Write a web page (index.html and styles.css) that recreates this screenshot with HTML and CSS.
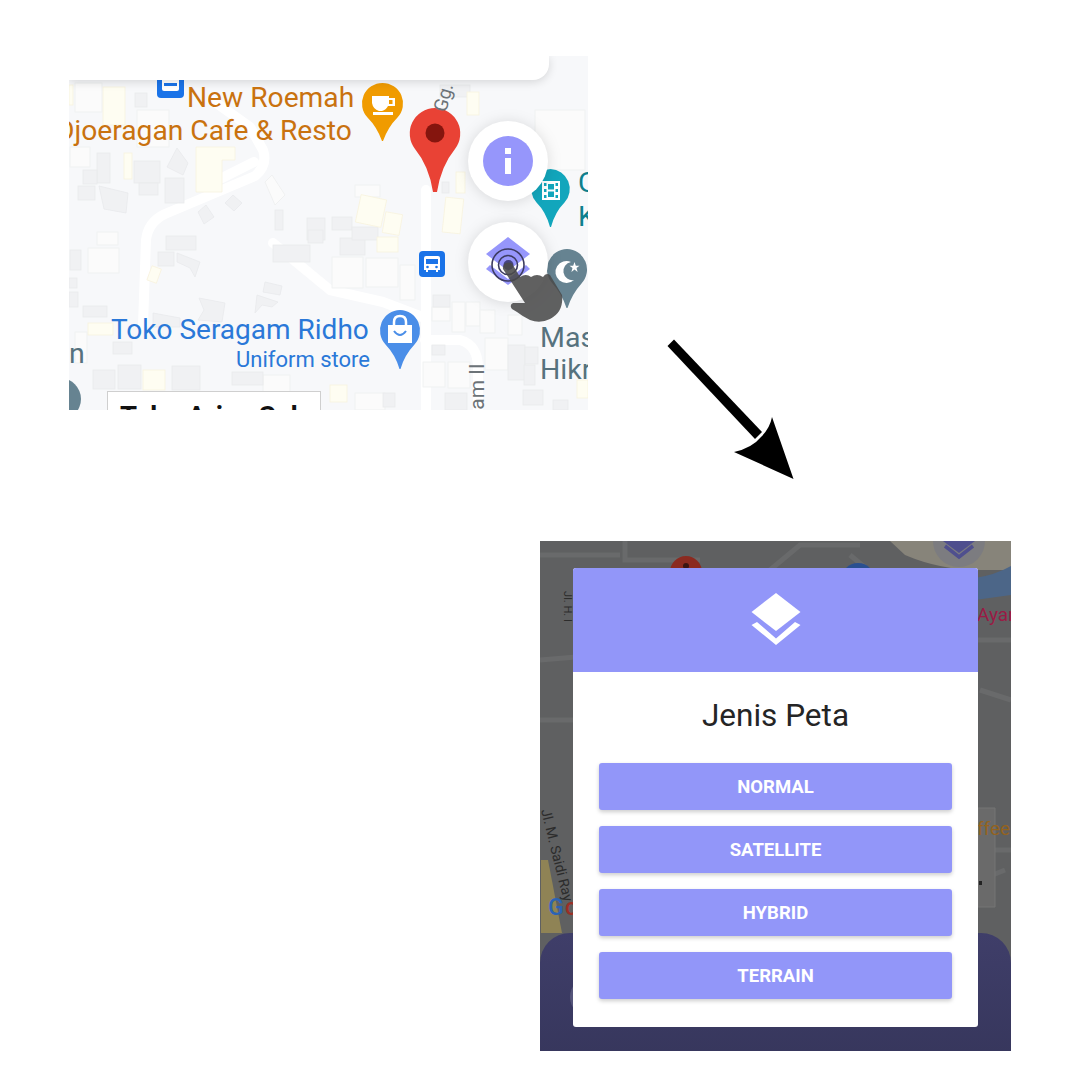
FILE: index.html
```html
<!DOCTYPE html>
<html lang="id">
<head>
<meta charset="utf-8">
<title>Jenis Peta</title>
<link rel="stylesheet" href="styles.css">
</head>
<body>
<main class="stage">
  <section class="map">
    <svg class="layer" viewBox="69 56 519 354" width="519" height="354">
      <g class="road">
        <path d="M143 325L146 240Q148 222 165 214L255 176Q268 165 263 150L250 127L212 100"/>
        <path d="M222 178L254 162"/>
        <path d="M273 243L330 290L383 302L425 318"/>
        <path d="M426 190V410"/>
        <path d="M425 340H460Q478 345 478 368V410"/>
      </g>
      <g class="lite">
        <rect x="75" y="83" width="27" height="29"/><rect x="137" y="110" width="32" height="37"/>
        <rect x="70" y="147" width="20" height="20"/><rect x="97" y="232" width="21" height="13"/>
        <rect x="88" y="248" width="31" height="25"/><rect x="75" y="332" width="12" height="31"/>
        <rect x="332" y="257" width="31" height="31"/><rect x="366" y="258" width="32" height="29"/>
        <rect x="400" y="265" width="15" height="35"/><rect x="432" y="307" width="18" height="14"/>
        <rect x="452" y="302" width="13" height="30"/><rect x="466" y="302" width="14" height="24"/>
        <rect x="480" y="310" width="15" height="23"/><rect x="508" y="315" width="14" height="20"/>
        <rect x="423" y="362" width="22" height="25"/><rect x="448" y="362" width="22" height="26"/>
        <rect x="485" y="338" width="23" height="32"/><rect x="355" y="185" width="25" height="12"/>
        <rect x="535" y="110" width="50" height="60"/><rect x="263" y="375" width="27" height="22"/>
        <rect x="355" y="393" width="30" height="17"/><path d="M265 182L272 175L285 195L275 205Z"/>
      </g>
      <g class="bld">
        <rect x="135" y="93" width="12" height="14"/><rect x="97" y="153" width="13" height="30"/>
        <rect x="83" y="170" width="14" height="14"/><rect x="78" y="186" width="17" height="14"/>
        <path d="M99 186L128 193L126 213L104 209Z"/><rect x="134" y="161" width="26" height="22"/>
        <rect x="139" y="183" width="19" height="12"/><rect x="165" y="178" width="19" height="25"/>
        <path d="M177 148L188 163L183 175L167 167Z"/><path d="M206 205L214 217L204 224L198 212Z"/>
        <path d="M233 195L242 203L234 211L225 203Z"/><rect x="275" y="210" width="8" height="20"/>
        <rect x="307" y="218" width="18" height="22"/><rect x="166" y="236" width="30" height="14"/>
        <rect x="158" y="252" width="16" height="14"/><path d="M177 253L200 262L195 277L190 268L177 262Z"/>
        <rect x="70" y="250" width="11" height="20"/><rect x="69" y="278" width="8" height="10"/>
        <rect x="69" y="292" width="9" height="15"/><rect x="83" y="306" width="24" height="11"/>
        <path d="M199 298L225 303L222 322L198 320L204 310Z"/><path d="M153 313L180 318V327H153Z"/>
        <path d="M265 282L282 286L280 295L263 292Z"/><path d="M257 295L278 302L272 307L262 305L255 313Z"/>
        <rect x="273" y="245" width="37" height="17"/><rect x="308" y="230" width="15" height="13"/>
        <rect x="113" y="342" width="19" height="12"/><rect x="93" y="370" width="22" height="19"/>
        <rect x="118" y="365" width="23" height="24"/><rect x="172" y="366" width="28" height="24"/>
        <rect x="232" y="372" width="31" height="13"/><rect x="340" y="238" width="25" height="17"/>
        <rect x="433" y="295" width="17" height="12"/><rect x="432" y="345" width="13" height="10"/>
        <rect x="508" y="345" width="17" height="35"/><rect x="525" y="347" width="13" height="17"/>
        <rect x="524" y="365" width="11" height="20"/><rect x="445" y="393" width="22" height="17"/>
        <rect x="383" y="393" width="12" height="14"/><rect x="523" y="390" width="20" height="15"/>
        <rect x="442" y="182" width="7" height="11"/><rect x="332" y="217" width="20" height="13"/>
        <rect x="352" y="227" width="26" height="13"/><rect x="440" y="85" width="30" height="12"/>
        <rect x="553" y="400" width="15" height="10"/>
      </g>
      <g class="cream">
        <rect x="103" y="87" width="22" height="38"/><rect x="124" y="153" width="8" height="26"/>
        <path d="M196 147H235V160H222V192H196Z"/><rect x="143" y="370" width="22" height="20"/>
        <rect x="88" y="323" width="25" height="12"/><rect x="149" y="267" width="10" height="15" transform="rotate(20 154 275)"/>
        <rect x="358" y="197" width="26" height="28" transform="rotate(12 371 211)"/>
        <rect x="384" y="213" width="17" height="21" transform="rotate(10 392 223)"/>
        <rect x="444" y="198" width="18" height="35" transform="rotate(6 453 215)"/>
        <rect x="467" y="92" width="12" height="23"/><rect x="456" y="172" width="9" height="21"/>
        <rect x="69" y="85" width="4" height="20"/><rect x="330" y="385" width="17" height="17"/>
        <rect x="377" y="237" width="21" height="15"/><rect x="420" y="323" width="0" height="0"/>
        <rect x="577" y="380" width="11" height="18"/>
      </g>

      <rect class="bus" x="157" y="72" width="27" height="26" rx="4"/>
      <path class="white" d="M164 78h13a2 2 0 0 1 2 2v9a2 2 0 0 1-2 2h-13a2 2 0 0 1-2-2v-9a2 2 0 0 1 2-2Z"/>
      <rect class="bus" x="164" y="83" width="13" height="3"/>

      <rect class="bus" x="419" y="251" width="26" height="26" rx="4"/>
      <path class="white" d="M426 256h12a2 2 0 0 1 2 2v12h-2v2h-2v-2h-8v2h-2v-2h-2v-12a2 2 0 0 1 2-2Z"/>
      <rect class="bus" x="426" y="259" width="12" height="5"/>
      <circle class="bus" cx="427.500" cy="267" r="1.300"/><circle class="bus" cx="436.500" cy="267" r="1.300"/>

      <path class="p-orange" d="M382.500 83a20.500 20.500 0 0 1 15 34.500Q388 127 383 141H382Q377 127 367.500 117.500A20.500 20.500 0 0 1 382.500 83Z"/>
      <path class="white" d="M372 96H389V98H395V106H388Q386 110 382 111H379Q373 109 372 103ZM389 100V104H392.500V100ZM373 112H393V115H373Z" fill-rule="evenodd"/>

      <path class="p-red" d="M435 108a25.500 25.500 0 0 1 20 41Q441 166 437 192H433Q429 166 415 149A25.500 25.500 0 0 1 435 108Z"/>
      <circle class="p-dot" cx="435" cy="133" r="9.500"/>

      <path class="p-teal" d="M550.500 169a20 20 0 0 1 14 33.500Q555 212 551 227H550Q546 212 536.500 202.500A20 20 0 0 1 550.500 169Z"/>
      <path class="white" d="M542 181H560V200H542ZM544 183V186H546.500V183ZM555.500 183V186H558V183ZM544 189V192H546.500V189ZM555.500 189V192H558V189ZM544 195V198H546.500V195ZM555.500 195V198H558V195ZM548 184V189.500H554V184ZM548 191.500V197H554V191.500Z" fill-rule="evenodd"/>

      <path class="p-slate" d="M567 249a20.500 20.500 0 0 1 14.500 34.500Q572 294 567.500 308H566.500Q562 294 552.500 283.500A20.500 20.500 0 0 1 567 249Z"/>
      <path class="white" d="M571 262A11 11 0 1 0 574 280A9 9 0 1 1 571 262Z"/>
      <path class="white" d="M574.500 262L575.800 265.800H579.500L576.500 268L577.600 272L574.500 269.600L571.400 272L572.500 268L569.500 265.800H573.200Z"/>

      <path class="p-blue" d="M400 310a20.500 20.500 0 0 1 14.500 34.500Q404.500 355 400.500 369H399.500Q395.500 355 385.500 344.500A20.500 20.500 0 0 1 400 310Z"/>
      <path class="white" d="M388 325H412V343H388Z"/>
      <path class="bag" d="M394 325V322Q394 316 400 316Q406 316 406 322V325"/>
      <path class="smile" d="M394 331Q400 339 406 331"/>

      <circle class="p-slate" cx="60" cy="399" r="21"/>

      <circle class="fab" cx="508" cy="161" r="40"/>
      <circle class="fab" cx="508" cy="262" r="40"/>
      <circle class="purple" cx="508" cy="161" r="25"/>
      <rect class="white" x="505" y="148" width="6" height="6"/>
      <rect class="white" x="505" y="158" width="6" height="16"/>

      <path class="purple" d="M508 237L530 254L508 271L486 254Z"/>
      <path class="purple" d="M490 265L508 279L526 265L530 269L508 285L486 269Z"/>
      <circle class="ring" cx="508" cy="265" r="16"/>
      <circle class="ring" cx="508" cy="265" r="9.500"/>
      <circle class="dot" cx="508.500" cy="265" r="5"/>
      <path class="hand" d="M503 269A5.500 5.500 0 0 1 513.500 266L520 277Q526 273 531 277Q537 273 543 277Q546 272 550 275L562 295Q564 312 550 319Q540 324 530 320Q522 316 517 312L512 309Q509 305 513 303L525 303Z"/>
    </svg>
    <div class="topcard"></div>
    <span class="lb orange l-roemah">New Roemah</span>
    <span class="lb orange l-djoe">Djoeragan Cafe &amp; Resto</span>
    <span class="lb blue l-toko">Toko Seragam Ridho</span>
    <span class="lb blue l-uni">Uniform store</span>
    <span class="lb slate l-mas">Mas</span>
    <span class="lb slate l-hik">Hikr</span>
    <span class="lb slate l-n">n</span>
    <span class="lb teal l-c">C</span>
    <span class="lb teal l-k">K</span>
    <span class="lb road-lb l-gg">Gg.</span>
    <span class="lb road-lb l-am">am II</span>
    <div class="tag">Toko Arisa Sal</div>
  </section>

  <svg class="arrow" viewBox="660 335 140 150" width="140" height="150">
    <path d="M667.500 346L674 339.500L762 432L755 439Z"/>
    <path d="M793.500 479L734 452Q752 448 761 437Q770 428 772 417Z"/>
  </svg>

  <section class="dialog-shot">
    <svg class="layer" viewBox="540 541 471 510" width="471" height="510">
      <defs>
        <linearGradient id="sheetFill" x1="0" y1="0" x2="0" y2="1">
          <stop offset="0" stop-color="#3f3e69"/>
          <stop offset="1" stop-color="#35355a"/>
        </linearGradient>
      </defs>
      <g class="d-road">
        <path d="M625 541V560H700"/><path d="M540 555H620"/><path d="M770 570L800 545H860"/>
        <path d="M540 660L600 655"/><path d="M850 555L880 580"/><path d="M978 640H1011"/>
        <path d="M980 690L1011 700"/><path d="M540 720H573"/><path d="M980 880L1005 870"/>
        <path d="M975 850H1011"/>
      </g>
      <path class="d-sand" d="M890 541H1011V570H980Q940 570 905 555Z"/>
      <path class="d-water" d="M975 578Q995 575 1011 566V595L975 600Z"/>
      <path class="d-box" d="M978 808H995V907H978Z"/>
      <path class="d-yellow" d="M541 860L548 860L562 933H541Z"/>
      <circle class="d-red" cx="686" cy="572" r="16"/>
      <circle class="d-dark" cx="686" cy="566" r="3"/>
      <circle class="d-blue" cx="858" cy="580" r="17"/>
      <circle class="d-fab" cx="959" cy="541" r="26"/>
      <path class="d-layer" d="M943 541H975L959 553Z"/>
      <path class="d-chev" d="M945 546L959 557L973 546"/>
      <rect class="d-sheet" x="540" y="933" width="471" height="150" rx="30" fill="url(#sheetFill)"/>
      <circle class="d-arc" cx="590" cy="997" r="20"/>
      <rect class="d-mark" x="979" y="881" width="3" height="4"/>
    </svg>
    <span class="lb d-ayan">Ayan</span>
    <span class="lb d-ffee">ffee</span>
    <span class="lb d-jl">Jl. M. Saidi Ray</span>
    <span class="lb d-top">Jl. H. I</span>
    <span class="lb d-g">G</span>
    <span class="lb d-o">o</span>

    <div class="modal">
      <header class="modal-head">
        <svg viewBox="0 0 50 52" width="50" height="52">
          <path d="M25 0L49.500 19L25 38L.500 19Z"/>
          <path d="M6 29L25 45.500L44 29L49.500 32L25 52L.500 32Z"/>
        </svg>
      </header>
      <div class="modal-body">
        <h1>Jenis Peta</h1>
        <div class="btns">
          <button>NORMAL</button>
          <button>SATELLITE</button>
          <button>HYBRID</button>
          <button>TERRAIN</button>
        </div>
      </div>
    </div>
  </section>
</main>
</body>
</html>
```
FILE: styles.css
```css
* { box-sizing: border-box; }
html, body { margin: 0; background: #fff; }
.stage { position: relative; width: 1080px; height: 1080px; overflow: hidden; font-family: Roboto, "Liberation Sans", sans-serif; }
.layer { position: absolute; left: 0; top: 0; display: block; }

.map { position: absolute; left: 69px; top: 56px; width: 519px; height: 354px; overflow: hidden; background: #f7f8fa; }
.road path { fill: none; stroke: #fff; stroke-width: 10; stroke-linecap: round; stroke-linejoin: round; }
.bld > * { fill: #f0f1f3; stroke: #e9eaec; stroke-width: .8; }
.lite > * { fill: #fbfbfb; stroke: #eeefef; stroke-width: .8; }
.cream > * { fill: #fefdf2; stroke: #f8f3df; stroke-width: .8; }
.white { fill: #fff; }
.bus { fill: #1a73e8; }
.p-orange { fill: #f09b00; }
.p-red { fill: #e94235; }
.p-dot { fill: #85150e; }
.p-teal { fill: #12a6bc; }
.p-slate { fill: #668391; }
.p-blue { fill: #4a8ee8; }
.bag { fill: none; stroke: #fff; stroke-width: 2.500; }
.smile { fill: none; stroke: #4a8ee8; stroke-width: 2; }
.fab { fill: #fff; filter: drop-shadow(0 1px 7px rgba(0,0,0,.13)); }
.purple { fill: #9696fb; }
.ring { fill: none; stroke: #3c3b60; stroke-width: 1.600; }
.dot { fill: #45447f; }
.hand { fill: #4a4a4a; fill-opacity: .88; }

.topcard { position: absolute; left: 0; top: 0; width: 480px; height: 24px; background: #fff; border-radius: 0 0 16px 0; box-shadow: 0 2px 10px rgba(0,0,0,.14); }
.lb { position: absolute; white-space: nowrap; line-height: 1; }
.orange { color: #c9720f; font-size: 28.200px; }
.blue { color: #2a78d8; }
.slate { color: #56727e; font-size: 28.500px; }
.teal { color: #0e7f8d; font-size: 28.500px; }
.road-lb { color: #6c7378; }
.l-roemah { left: 118px; top: 28px; }
.l-djoe { left: -13px; top: 61px; }
.l-toko { left: 42px; top: 260px; font-size: 28px; }
.l-uni { left: 167px; top: 293px; font-size: 22px; }
.l-mas { left: 471px; top: 268px; }
.l-hik { left: 471px; top: 300px; }
.l-n { left: 0; top: 284px; }
.l-c { left: 509px; top: 113px; }
.l-k { left: 509px; top: 147px; }
.l-gg { left: 360px; top: 32px; font-size: 19px; transform: rotate(-75deg); }
.l-am { left: 385px; top: 320px; font-size: 21px; transform: rotate(-90deg); }
.tag { position: absolute; left: 38px; top: 335px; width: 214px; height: 40px; padding: 11px 0 0 12px; background: #fff; border: 1px solid #cfcfcf; color: #111; font-weight: 700; font-size: 27.500px; line-height: 1; white-space: nowrap; }

.arrow { position: absolute; left: 660px; top: 335px; display: block; }

.dialog-shot { position: absolute; left: 540px; top: 541px; width: 471px; height: 510px; overflow: hidden; background: #5f6061; }
.d-road path { fill: none; stroke: #696a6b; stroke-width: 5; }
.d-sand { fill: #87847a; }
.d-water { fill: #4c6688; }
.d-box { fill: #6a6a6a; stroke: #747474; }
.d-yellow { fill: #8f8355; }
.d-red { fill: #8b2a20; }
.d-dark { fill: #3a1512; }
.d-blue { fill: #2a4f90; }
.d-fab { fill: #7c7c80; }
.d-layer { fill: #4f4f8e; }
.d-chev { fill: none; stroke: #4f4f8e; stroke-width: 3.500; }
.d-arc { fill: #55557a; }
.d-mark { fill: #222; }
.d-ayan { left: 437px; top: 64px; color: #9a1b45; font-size: 19px; }
.d-ffee { left: 437px; top: 278px; color: #93631f; font-size: 19px; }
.d-jl { left: -30px; top: 307px; color: #2c2c2c; font-size: 14px; transform: rotate(76deg); }
.d-top { left: 12px; top: 60px; color: #2c2c2c; font-size: 11px; transform: rotate(90deg); }
.d-g { left: 8px; top: 355px; color: #2b63b5; font-size: 23px; font-weight: 500; }
.d-o { left: 25px; top: 355px; color: #9c2f26; font-size: 23px; font-weight: 500; }

.modal { position: absolute; left: 33px; top: 27px; width: 405px; height: 459px; background: #fff; border-radius: 3px; overflow: hidden; display: flex; flex-direction: column; }
.modal-head { height: 104px; flex: none; background: #9296f9; display: flex; justify-content: center; align-items: flex-start; padding-top: 25px; }
.modal-head svg { display: block; fill: #fff; }
.modal-body { flex: 1; display: flex; flex-direction: column; padding: 0 26px; }
.modal-body h1 { margin: 26px 0 0; height: 36px; font-weight: 400; font-size: 31.500px; line-height: 36px; color: #252525; text-align: center; }
.btns { display: flex; flex-direction: column; gap: 16px; margin-top: 29px; }
.btns button { height: 47px; padding: 0; border: 0; border-radius: 3px; background: #9296f9; color: #fff; font-family: Roboto, "Liberation Sans", sans-serif; font-weight: 700; font-size: 18.500px; box-shadow: 0 2px 4px rgba(0,0,0,.2); }
```
